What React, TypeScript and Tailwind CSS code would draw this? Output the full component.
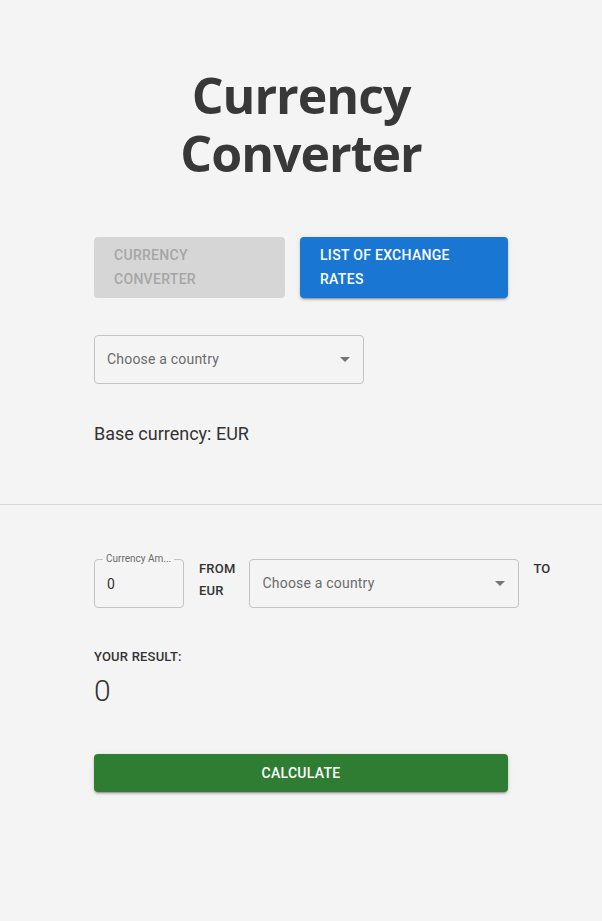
import React from "react";

function Caret() {
  return (
    <svg width="10" height="5" viewBox="0 0 10 5" className="shrink-0">
      <path d="M0 0 L5 5 L10 0 Z" fill="#757575" />
    </svg>
  );
}

function Select({ w }: { w: string }) {
  return (
    <div className={`${w} h-[49px] border border-[#c4c4c4] rounded-[4px] flex items-center justify-between pl-[12px] pr-[13px]`}>
      <span className="text-[14px] text-[#6b6b6b] tracking-[0.2px]">Choose a country</span>
      <Caret />
    </div>
  );
}

export default function App() {
  return (
    <div className="min-h-[921px] bg-[#f4f4f4] text-[#333] font-['Roboto',sans-serif]">
      <div className="w-[414px] mx-auto pt-[66px]">
        <h1 className="text-center font-['Open_Sans',sans-serif] font-bold text-[#383838] text-[50px] leading-[58px] tracking-[-1px]">
          <span className="block">Currency</span>
          <span className="block">Converter</span>
        </h1>
        <div className="flex gap-[15px] mt-[55px]">
          <div className="w-[191px] h-[61px] rounded-[4px] bg-[#d6d6d6] text-[#a6a6a6] text-[14px] font-medium leading-[24px] px-[20px] py-[6px] tracking-[0.3px]">
            CURRENCY
            <br />
            CONVERTER
          </div>
          <div className="w-[208px] h-[61px] rounded-[4px] bg-[#1976d2] text-white text-[14px] font-medium leading-[24px] px-[20px] py-[6px] tracking-[0.3px] shadow-[0_3px_1px_-2px_rgba(0,0,0,0.2),0_2px_2px_0_rgba(0,0,0,0.14),0_1px_5px_0_rgba(0,0,0,0.12)]">
            LIST OF EXCHANGE
            <br />
            RATES
          </div>
        </div>
        <div className="mt-[37px]">
          <Select w="w-[270px]" />
        </div>
        <div className="mt-[38px] text-[18px] leading-[24px] text-[#333]">Base currency: EUR</div>
      </div>
      <div className="h-px bg-[#d6d6d6] mt-[58px]" />
      <div className="w-[414px] mx-auto pt-[54px]">
        <div className="flex items-start">
          <div className="relative w-[90px] h-[49px] border border-[#c4c4c4] rounded-[4px] shrink-0">
            <span className="absolute -top-[7px] left-[8px] px-[3px] bg-[#f4f4f4] text-[10px] leading-[12px] text-[#6b6b6b]">
              Currency Am...
            </span>
            <span className="absolute left-[12px] top-[15px] text-[14px] leading-[18px] text-[#333]">0</span>
          </div>
          <div className="ml-[15px] text-[13px] font-medium leading-[22px] text-[#333] tracking-[0.2px] -mt-[1px]">
            FROM
            <br />
            EUR
          </div>
          <div className="ml-[14px] shrink-0">
            <Select w="w-[270px]" />
          </div>
          <div className="ml-[14px] text-[13px] font-medium leading-[22px] text-[#333] -mt-[1px]">TO</div>
        </div>
        <div className="mt-[40px] text-[13px] font-medium leading-[18px] text-[#333] tracking-[0.2px]">YOUR RESULT:</div>
        <div className="mt-[5px] text-[30px] font-light leading-[40px] text-[#333]">0</div>
        <div className="mt-[43px] h-[38px] rounded-[4px] bg-[#2e7d32] text-white text-[14px] font-medium flex items-center justify-center tracking-[0.3px] shadow-[0_3px_1px_-2px_rgba(0,0,0,0.2),0_2px_2px_0_rgba(0,0,0,0.14),0_1px_5px_0_rgba(0,0,0,0.12)]">
          CALCULATE
        </div>
      </div>
    </div>
  );
}
